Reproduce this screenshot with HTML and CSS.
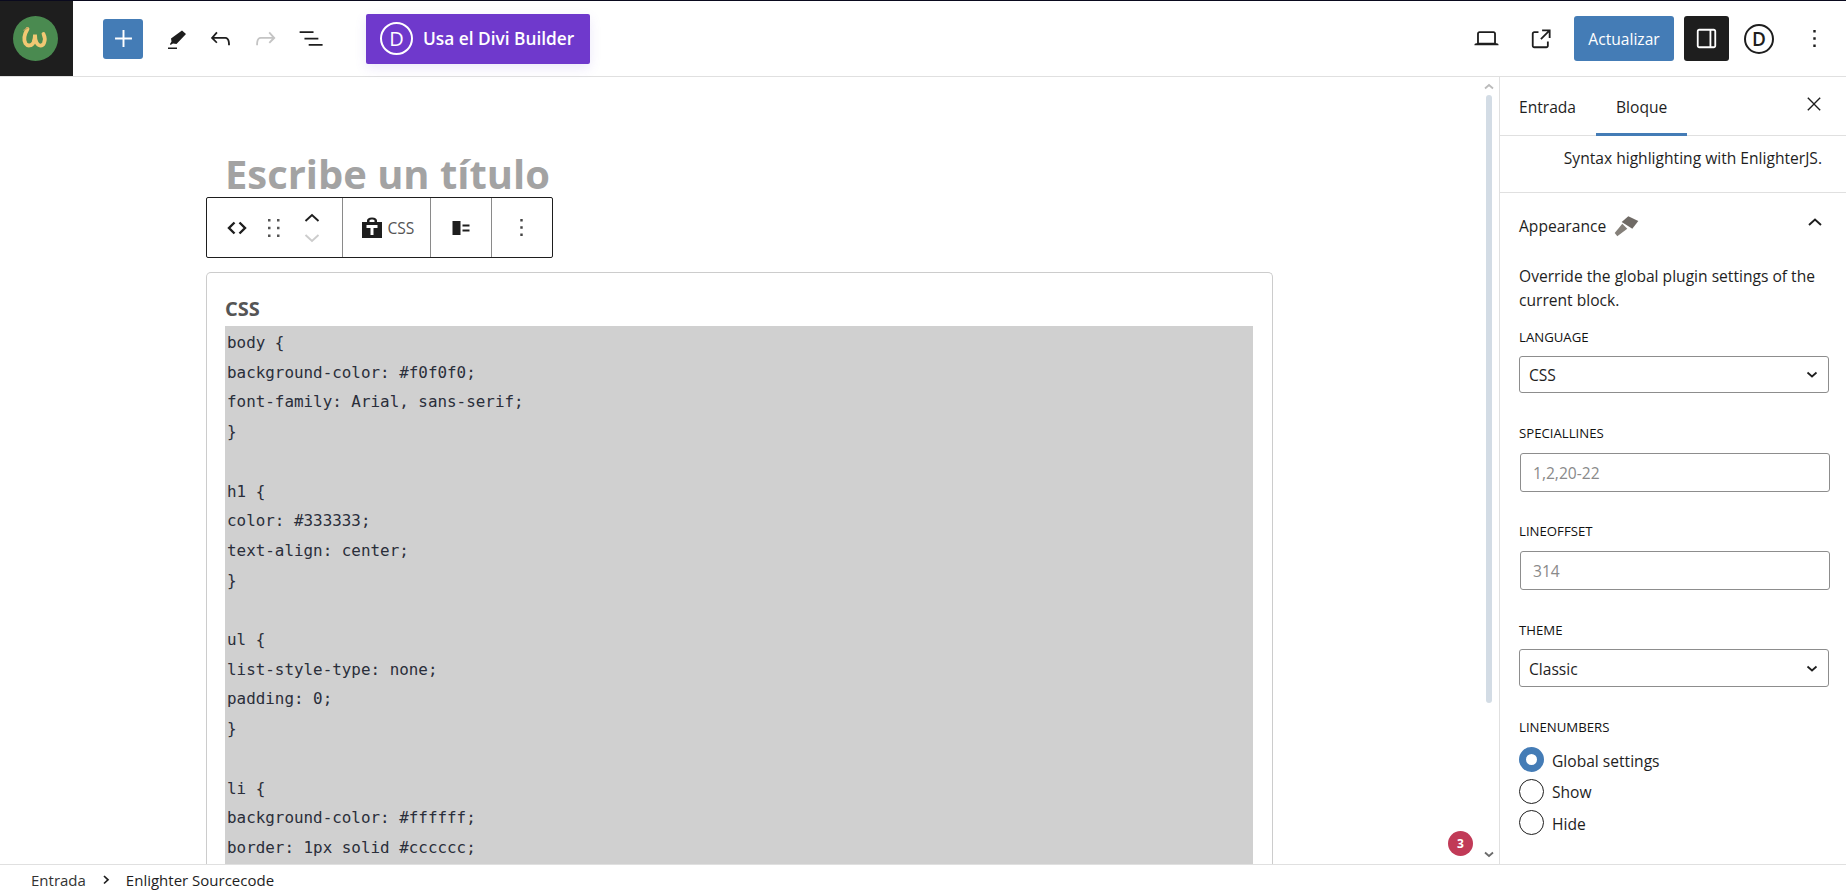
FILE: index.html
```html
<!DOCTYPE html>
<html lang="es">
<head>
<meta charset="utf-8">
<title>Editor</title>
<link rel="stylesheet" href="styles.css">
</head>
<body>
<div class="app">
  <header class="topbar">
    <div class="left">
      <div class="logo-box">
        <svg width="45" height="45" viewBox="0 0 45 45"><circle cx="22.500" cy="22.500" r="22.500" fill="#4a8a50"/><path d="M14.500 13C11 19 10.500 24 12.500 27.500C14.500 30.500 19 30 20.500 26.500C21.500 24 22 21 22 18.500C22 21.500 22.500 24.500 23.500 26.500C25.500 30.500 29.500 30.500 31 27C32 24.500 32 21 30.500 18" fill="none" stroke="#f2c873" stroke-width="3.800" stroke-linecap="round"/><path d="M10.500 14.500l5-3" stroke="#b9a060" stroke-width="1.200"/></svg>
      </div>
      <div class="tools">
        <button class="add-btn"><svg width="29" height="29" viewBox="0 0 24 24"><path d="M11.200 5h1.600v6.200H19v1.600h-6.200V19h-1.600v-6.200H5v-1.600h6.200z" fill="#fff"/></svg></button>
        <span class="tool"><svg width="24" height="24" viewBox="0 0 24 24"><path d="M18 3.500l4 3.500-9.500 10-3.500-.5-2.500 1.500-.5-1 1.500-2.500-.5-3z" fill="#1e1e1e"/><path d="M4 20.500h9V22H4z" fill="#1e1e1e"/></svg></span>
        <span class="tool"><svg width="29" height="29" viewBox="0 0 24 24"><path d="M18.300 11.700c-.6-.6-1.400-.9-2.300-.9H6.700l2.900-3.300-1.100-1-4.500 5L8.500 16l1-1-2.700-2.700H16c.5 0 .9.200 1.300.5 1 1 1 3.400 1 4.500v.3h1.500v-.2c0-1.500 0-4.300-1.500-5.700z" fill="#1e1e1e"/></svg></span>
        <span class="tool"><svg width="29" height="29" viewBox="0 0 24 24"><path d="M15.600 6.500l-1.100 1 2.900 3.300H8c-.9 0-1.700.3-2.300.9-1.400 1.500-1.400 4.200-1.400 5.600v.2h1.500v-.3c0-1.100 0-3.500 1-4.500.3-.3.7-.5 1.300-.5h9.200L14.600 15l1.100 1.100 4.600-4.600-4.700-5z" fill="#c4c4c4"/></svg></span>
        <span class="tool"><svg width="29" height="29" viewBox="0 0 24 24"><path d="M3 6h11.500v1.500H3zM7 11.300h11.500v1.500H7zM10.500 16.500H22V18H10.500z" fill="#1e1e1e"/></svg></span>
      </div>
      <button class="divi-btn"><span class="divi-d">D</span>Usa el Divi Builder</button>
    </div>
    <div class="right">
      <span class="tool"><svg width="29" height="29" viewBox="0 0 24 24"><path d="M20.500 16h-.7V8c0-1.100-.9-2-2-2H6.200c-1.100 0-2 .9-2 2v8h-.7c-.8 0-1.500.7-1.500 1.500h20c0-.8-.7-1.500-1.500-1.500zM5.700 8c0-.3.2-.5.500-.5h11.600c.3 0 .5.200.5.500v7.600H5.700V8z" fill="#1e1e1e"/></svg></span>
      <span class="tool"><svg width="29" height="29" viewBox="0 0 24 24"><path d="M19.500 4.500h-7V6h4.440l-5.970 6.030 1.060 1.060L18 7.070v4.440h1.500v-7zM6 7.500h3.500V6H6c-1.100 0-2 .9-2 2v10c0 1.100.9 2 2 2h10c1.100 0 2-.9 2-2v-3.500h-1.500V18a.5.5 0 0 1-.5.500H6a.5.5 0 0 1-.5-.5V8c0-.3.2-.5.500-.5z" fill="#1e1e1e"/></svg></span>
      <button class="update-btn">Actualizar</button>
      <button class="panel-btn"><svg width="29" height="29" viewBox="0 0 24 24"><path d="M18 4H6c-1.100 0-2 .9-2 2v12c0 1.100.9 2 2 2h12c1.100 0 2-.9 2-2V6c0-1.100-.9-2-2-2zM5.500 18V6c0-.3.2-.5.500-.5h8.500v13H6c-.3 0-.5-.2-.5-.5zm13 0c0 .3-.2.500-.5.500h-2v-13h2c.3 0 .5.2.5.500v12z" fill="#fff"/></svg></button>
      <span class="divi-round">D</span>
      <span class="dots"><svg width="29" height="29" viewBox="0 0 24 24"><path d="M13 19h-2v-2h2v2zm0-6h-2v-2h2v2zm0-6h-2V5h2v2z" fill="#1e1e1e"/></svg></span>
    </div>
  </header>

  <div class="body-row">
    <main class="editor">
      <div class="scroll-arrow up"><svg width="10" height="7" viewBox="0 0 10 7"><path d="M1 5.500 5 2l4 3.500" fill="none" stroke="#bbb" stroke-width="1.800"/></svg></div>
      <div class="scroll-thumb"></div>
      <div class="scroll-arrow down"><svg width="10" height="7" viewBox="0 0 10 7"><path d="M1 1.500 5 5l4-3.500" fill="none" stroke="#6b6b6b" stroke-width="1.800"/></svg></div>
      <span class="badge">3</span>

      <div class="canvas">
        <h1 class="post-title">Escribe un título</h1>
        <div class="block-toolbar">
          <div class="tb-group first">
            <svg width="24" height="24" viewBox="0 0 24 24"><path d="M9.500 6.500 4 12l5.500 5.500M14.500 6.500 20 12l-5.500 5.500" fill="none" stroke="#1e1e1e" stroke-width="2.400"/></svg>
            <svg width="18" height="24" viewBox="0 0 18 24"><path d="M3 3h2.500v2.500H3zM12 3h2.500v2.500H12zM3 10.800h2.500v2.500H3zM12 10.800h2.500v2.500H12zM3 18.500h2.500V21H3zM12 18.500h2.500V21H12z" fill="#555"/></svg>
            <div class="movers">
              <svg width="24" height="20" viewBox="0 0 24 20"><path d="M5.500 13 12 7l6.500 6" fill="none" stroke="#1e1e1e" stroke-width="1.900"/></svg>
              <svg width="24" height="20" viewBox="0 0 24 20"><path d="M5.500 7l6.500 6 6.500-6" fill="none" stroke="#ccc" stroke-width="1.900"/></svg>
            </div>
          </div>
          <div class="tb-group lang">
            <svg width="22" height="24" viewBox="0 0 22 24"><path fill-rule="evenodd" d="M1 6h5V4.500C6 3 7.500 1.500 11 1.500S16 3 16 4.500V6h5v16H1zM8.500 6h5V4.500c-.5-.7-1.300-1-2.500-1s-2 .3-2.500 1zM5.500 9v3h4v7h3v-7h4V9z" fill="#1e1e1e"/></svg>
            <span>CSS</span>
          </div>
          <div class="tb-group align">
            <svg width="20" height="20" viewBox="0 0 20 20"><path d="M1.500 3h8v14h-8zM11.500 6.500h7v2h-7zM11.500 11.500h7v2h-7z" fill="#1e1e1e"/></svg>
          </div>
          <div class="tb-group more">
            <svg width="29" height="29" viewBox="0 0 24 24"><path d="M13 19h-2v-2h2v2zm0-6h-2v-2h2v2zm0-6h-2V5h2v2z" fill="#444"/></svg>
          </div>
        </div>
        <section class="code-card">
          <div class="code-title">CSS</div>
          <pre class="code">body {
background-color: #f0f0f0;
font-family: Arial, sans-serif;
}

h1 {
color: #333333;
text-align: center;
}

ul {
list-style-type: none;
padding: 0;
}

li {
background-color: #ffffff;
border: 1px solid #cccccc;</pre>
        </section>
      </div>
    </main>

    <aside class="sidebar">
      <div class="tabs">
        <span class="tab">Entrada</span>
        <span class="tab active">Bloque</span>
        <svg class="close" width="22" height="22" viewBox="0 0 24 24"><path d="M13 12l6.300-6.300-1.100-1-6.200 6.200-6.200-6.200-1.100 1L11 12l-6.300 6.300 1.100 1 6.200-6.200 6.200 6.200 1.100-1z" fill="#1e1e1e"/></svg>
      </div>
      <div class="desc-panel">Syntax highlighting with EnlighterJS.</div>
      <div class="appearance">
        <div class="app-head">
          <span>Appearance</span>
          <svg class="brush" width="25" height="24" viewBox="0 0 25 24"><path d="M7.700 8 14.300 2.300 24.300 7l-6 7.700z" fill="#6f6a65"/><path d="M.7 19l2.600 3.300 10-7.600-5-5z" fill="#85807a"/></svg>
          <svg class="chev" width="24" height="24" viewBox="0 0 24 24"><path d="M6 15l6-5.500 6 5.500" fill="none" stroke="#1e1e1e" stroke-width="1.900"/></svg>
        </div>
        <p class="help">Override the global plugin settings of the current block.</p>
        <label class="fld-label l-lang">LANGUAGE</label>
        <div class="select"><span>CSS</span><svg width="14" height="10" viewBox="0 0 14 10"><path d="M2.500 2.500 7 6.500l4.500-4" fill="none" stroke="#1e1e1e" stroke-width="1.700"/></svg></div>
        <label class="fld-label l-spec">SPECIALLINES</label>
        <div class="input">1,2,20-22</div>
        <label class="fld-label l-off">LINEOFFSET</label>
        <div class="input">314</div>
        <label class="fld-label l-theme">THEME</label>
        <div class="select tall"><span>Classic</span><svg width="14" height="10" viewBox="0 0 14 10"><path d="M2.500 2.500 7 6.500l4.500-4" fill="none" stroke="#1e1e1e" stroke-width="1.700"/></svg></div>
        <label class="fld-label l-num">LINENUMBERS</label>
        <div class="radios">
          <div class="radio-row"><span class="radio on"></span><span class="r-text">Global settings</span></div>
          <div class="radio-row"><span class="radio"></span><span class="r-text">Show</span></div>
          <div class="radio-row"><span class="radio"></span><span class="r-text">Hide</span></div>
        </div>
      </div>
    </aside>
  </div>

  <footer class="crumbs">
    <span>Entrada</span>
    <svg width="14" height="14" viewBox="0 0 14 14"><path d="M5 3l4 3.800L5 10.500" fill="none" stroke="#1e1e1e" stroke-width="1.700"/></svg>
    <span>Enlighter Sourcecode</span>
  </footer>
</div>
</body>
</html>
```
FILE: styles.css
```css
* { box-sizing: border-box; }
html, body { margin: 0; height: 100%; overflow: hidden; background: #fff; }
body { font-family: "Open Sans", "Noto Sans", sans-serif; color: #1e1e1e; font-size: 15.600px; }
button { font-family: inherit; border: 0; padding: 0; }
svg { display: block; flex: none; }
.app { height: 891px; display: flex; flex-direction: column; border-top: 1px solid #0a0a1e; }

.topbar { height: 76px; flex: none; display: flex; justify-content: space-between; border-bottom: 1px solid #e0e0e0; }
.left, .right { display: flex; align-items: center; }
.logo-box { width: 73px; height: 75px; background: #1e1e1e; display: flex; align-items: center; justify-content: center; padding-right: 2px; }
.tools { display: flex; align-items: center; margin-left: 30px; }
.add-btn { width: 40px; height: 40px; background: #447cb6; border-radius: 3px; display: flex; align-items: center; justify-content: center; margin-right: 10px; }
.tool { width: 45px; height: 40px; display: flex; align-items: center; justify-content: center; }
.divi-btn { width: 224px; height: 50px; margin-left: 33px; background: #6f39cc; color: #fff; font-size: 17.300px; font-weight: 600; border-radius: 2px; display: flex; align-items: center; padding-left: 14px; gap: 10px; box-shadow: 0 4px 12px rgba(110, 80, 220, .13); }
.divi-d { width: 33px; height: 33px; border: 2px solid #fff; border-radius: 50%; display: flex; align-items: center; justify-content: center; font-size: 20px; font-weight: 400; }
.right { padding-right: 17px; }
.right .tool { margin-right: 10px; }
.update-btn { width: 100px; height: 45px; background: #447cb6; color: #fff; font-size: 15.600px; border-radius: 3px; margin-right: 10px; }
.panel-btn { width: 45px; height: 45px; background: #1e1e1e; border-radius: 3px; display: flex; align-items: center; justify-content: center; margin-right: 15px; }
.divi-round { width: 30px; height: 30px; border: 2.500px solid #1e1e1e; border-radius: 50%; display: flex; align-items: center; justify-content: center; font-size: 19px; font-weight: 600; margin-right: 25px; }
.dots { width: 30px; display: flex; justify-content: center; }

.body-row { flex: 1; min-height: 0; display: flex; }
.editor { flex: 1; min-width: 0; position: relative; overflow: hidden; }
.scroll-thumb { position: absolute; left: 1486px; top: 18px; width: 6px; height: 608px; background: #d3dce5; border-radius: 3px; }
.scroll-arrow { position: absolute; left: 1484px; }
.scroll-arrow.up { top: 6px; }
.scroll-arrow.down { bottom: 6px; }
.badge { position: absolute; left: 1448px; top: 754px; width: 25px; height: 25px; border-radius: 50%; background: #c13a57; color: #fff; font-size: 12px; font-weight: 700; display: flex; align-items: center; justify-content: center; }

.canvas { margin-left: 206px; width: 1067px; padding-top: 74px; }
.post-title { margin: 0 0 0 19px; font-size: 39.900px; line-height: 46px; font-weight: 700; color: #a3a3a3; }
.block-toolbar { display: flex; width: 347px; height: 61px; margin-left: -0.500px; border: 1px solid #1e1e1e; border-radius: 2px; background: #fff; }
.tb-group { display: flex; align-items: center; justify-content: center; border-left: 1px solid #8a8a8a; }
.tb-group.first { width: 135px; border-left: 0; padding-left: 18px; gap: 16px; justify-content: flex-start; }
.movers { display: flex; flex-direction: column; margin-left: 1px; }
.tb-group.lang { width: 88px; gap: 5px; color: #555; font-size: 15.600px; justify-content: flex-start; padding-left: 18px; }
.tb-group.align { width: 61px; }
.tb-group.more { flex: 1; }

.code-card { margin-top: 14px; border: 1px solid #ccc; border-bottom: 0; border-radius: 5px 5px 0 0; padding: 23px 19px 0 18px; }
.code-title { font-size: 20px; font-weight: 700; line-height: 26px; margin-bottom: 4px; color: #555; }
.code { margin: 0; background: #d0d0d0; font-family: "DejaVu Sans Mono", "Liberation Mono", monospace; font-size: 15.900px; line-height: 29.700px; padding: 2px 2px 4px; color: #2a2e3a; }

.sidebar { width: 347px; flex: none; border-left: 1px solid #e0e0e0; overflow: hidden; }
.tabs { height: 59px; display: flex; align-items: center; position: relative; border-bottom: 1px solid #e0e0e0; padding-left: 19px; }
.tab { font-weight: 500; height: 59px; padding-top: 2px; display: flex; align-items: center; }
.tab.active { margin-left: 20px; padding: 2px 20px 0; box-shadow: inset 0 -3px 0 #447cb6; }
.close { position: absolute; right: 21px; top: 16px; }
.desc-panel { height: 57px; padding: 12px 24px 0 0; text-align: right; line-height: 20px; border-bottom: 1px solid #e0e0e0; }
.appearance { padding: 0 17px 0 19px; }
.app-head { height: 66px; display: flex; align-items: center; font-weight: 500; position: relative; }
.brush { margin-left: 8px; }
.chev { position: absolute; right: 2px; top: 17px; }
.help { margin: 5px 0 0; line-height: 24px; }
.fld-label { display: block; font-size: 13.200px; font-weight: 500; line-height: 18px; color: #111; }
.l-lang { margin-top: 16px; }
.l-spec { margin-top: 31px; }
.l-off { margin-top: 30px; }
.l-theme { margin-top: 31px; }
.l-num { margin-top: 31px; }
.select, .input { height: 37px; margin-top: 10px; border: 1px solid #8d8d8d; border-radius: 3px; display: flex; align-items: center; justify-content: space-between; padding: 0 9px; }
.select.tall { height: 38px; padding-top: 1px; }
.input { height: 39px; margin-top: 11px; margin-left: 1px; margin-right: -1px; padding: 0 12px; color: #8a8a8a; }
.radios { margin-top: 8px; }
.radio-row { height: 31.500px; display: flex; align-items: center; gap: 8px; }
.r-text { margin-top: 2px; }
.radio { width: 25px; height: 25px; border: 1px solid #1e1e1e; border-radius: 50%; flex: none; }
.radio.on { border: 7.500px solid #447cb6; background: #fff; }

.crumbs { height: 27px; flex: none; display: flex; align-items: center; border-top: 1px solid #e0e0e0; padding: 3px 0 0 31px; gap: 13px; font-size: 15px; }
.crumbs span:first-child { color: #333; }
```
